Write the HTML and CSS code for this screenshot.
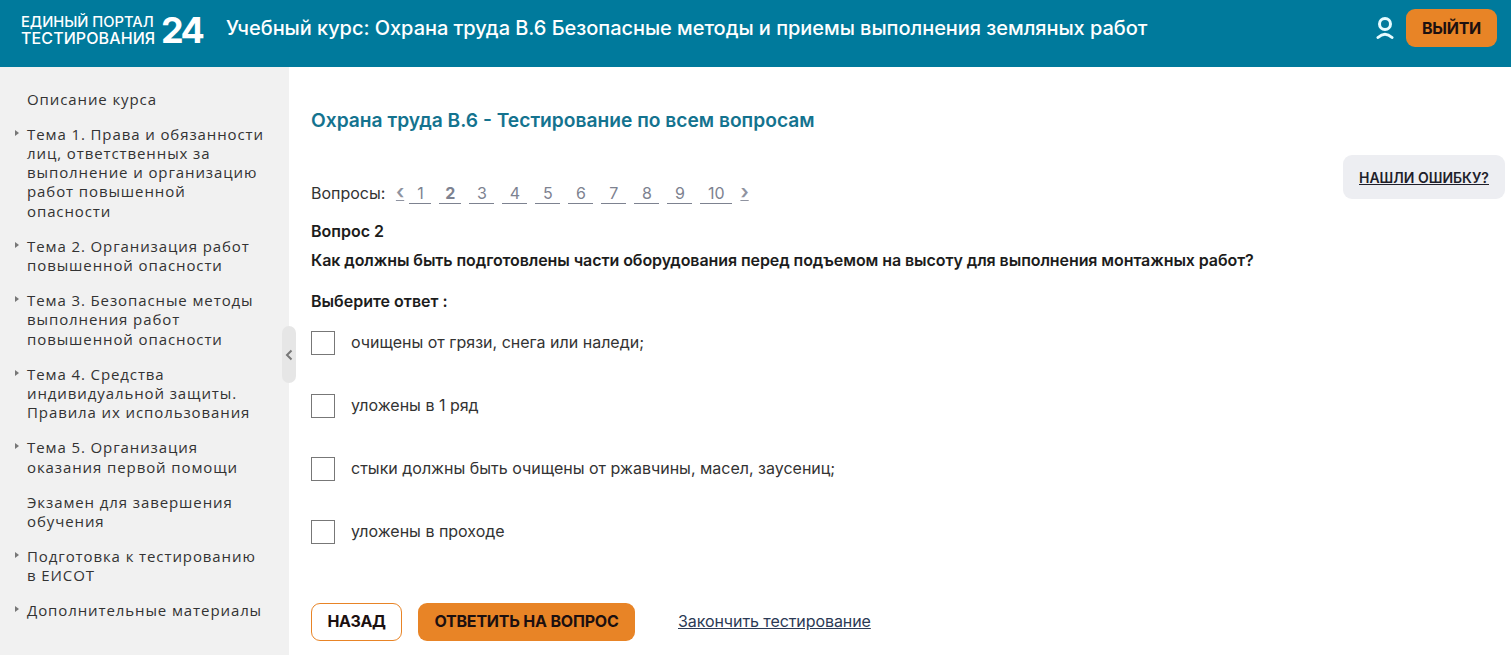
FILE: index.html
```html
<!DOCTYPE html>
<html lang="ru">
<head>
    <meta charset="UTF-8">
    <title>Учебный курс</title>
    <link rel="stylesheet" href="styles.css">
</head>
<body>
    <!-- Header -->
    <div class="header">
        <div class="logo">
            <div class="logo-text"><span class="logo-top">ЕДИНЫЙ ПОРТАЛ</span><span class="logo-bottom">ТЕСТИРОВАНИЯ</span></div>
            <div class="logo-num">24</div>
        </div>
        <div class="course-title">Учебный курс: Охрана труда В.6 Безопасные методы и приемы выполнения земляных работ</div>
        <svg class="user-icon" width="18" height="24" viewBox="0 0 18 24" fill="none" stroke="#e6fbff" stroke-width="3">
            <circle cx="9" cy="8" r="5.5"/>
            <path d="M2 21.5 Q9 15 16 21.5" stroke-linecap="round"/>
        </svg>
        <button class="logout">ВЫЙТИ</button>
    </div>

    <div class="layout">
        <!-- Sidebar -->
        <div class="sidebar">
            <div class="menu-item plain">Описание курса</div>
            <div class="menu-item">Тема 1. Права и обязанности лиц, ответственных за выполнение и организацию работ повышенной опасности</div>
            <div class="menu-item">Тема 2. Организация работ повышенной опасности</div>
            <div class="menu-item">Тема 3. Безопасные методы выполнения работ повышенной опасности</div>
            <div class="menu-item">Тема 4. Средства индивидуальной защиты. Правила их использования</div>
            <div class="menu-item">Тема 5. Организация оказания первой помощи</div>
            <div class="menu-item plain">Экзамен для завершения обучения</div>
            <div class="menu-item">Подготовка к тестированию в ЕИСОТ</div>
            <div class="menu-item">Дополнительные материалы</div>
            <div class="collapse">
                <svg width="8" height="12" viewBox="0 0 8 12" fill="none" stroke="#777" stroke-width="2"><path d="M6.5 1.5 L2 6 L6.5 10.5"/></svg>
            </div>
        </div>

        <!-- Test -->
        <div class="content">
            <h1 class="test-title">Охрана труда В.6 - Тестирование по всем вопросам</h1>
            <div class="pager">
                <span class="pager-label">Вопросы:</span>
                <a class="arrow">‹</a>
                <a class="page narrow">1</a>
                <a class="page narrow current">2</a>
                <a class="page">3</a>
                <a class="page">4</a>
                <a class="page">5</a>
                <a class="page">6</a>
                <a class="page">7</a>
                <a class="page">8</a>
                <a class="page">9</a>
                <a class="page wide">10</a>
                <a class="arrow">›</a>
            </div>
            <div class="question-num">Вопрос 2</div>
            <div class="question">Как должны быть подготовлены части оборудования перед подъемом на высоту для выполнения монтажных работ?</div>
            <div class="choose">Выберите ответ :</div>
            <div class="answers">
                <label class="answer"><span class="check"></span>очищены от грязи, снега или наледи;</label>
                <label class="answer"><span class="check"></span>уложены в 1 ряд</label>
                <label class="answer"><span class="check"></span>стыки должны быть очищены от ржавчины, масел, заусениц;</label>
                <label class="answer"><span class="check"></span>уложены в проходе</label>
            </div>
            <div class="actions">
                <button class="btn back">НАЗАД</button>
                <button class="btn submit">ОТВЕТИТЬ НА ВОПРОС</button>
                <a class="finish">Закончить тестирование</a>
            </div>
            <a class="report">НАШЛИ ОШИБКУ?</a>
        </div>
    </div>
</body>
</html>
```

FILE: styles.css
```css
/* Basic Reset */
body {
    margin: 0;
    font-family: Inter, Arial, sans-serif;
    background-color: #fff;
    color: #1c1c1c;
    height: 655px;
    overflow: hidden;
}

/* Header */
.header {
    height: 67px;
    display: flex;
    align-items: center;
    padding: 0 14px 11px 21px;
    background-color: #007a9c;
    color: #fff;
    box-sizing: border-box;
}

.logo {
    display: flex;
    align-items: center;
    width: 205px;
    margin-top: 3px;
}

.logo-text {
    display: flex;
    flex-direction: column;
    font-weight: 500;
    width: 140px;
    margin-top: 1px;
}

.logo-top {
    font-size: 14.7px;
    line-height: 15px;
    white-space: nowrap;
}

.logo-bottom {
    font-size: 16px;
    line-height: 16px;
    letter-spacing: 0.1px;
    white-space: nowrap;
}

.logo-num {
    font-size: 36px;
    font-weight: 700;
    line-height: 36px;
    letter-spacing: -2.5px;
}

.course-title {
    flex: 1;
    font-size: 20px;
    font-weight: 500;
    letter-spacing: -0.045px;
}

.user-icon {
    margin-right: 12px;
}

.logout {
    width: 91px;
    height: 38px;
    border: none;
    border-radius: 9px;
    background-color: #e88426;
    color: #1c1010;
    font-family: Inter, Arial, sans-serif;
    font-size: 16px;
    font-weight: 700;
    letter-spacing: -0.3px;
}

.layout {
    display: flex;
    height: 588px;
}

/* Sidebar */
.sidebar {
    position: relative;
    width: 289px;
    flex-shrink: 0;
    box-sizing: border-box;
    padding: 22.5px 22px 0 27px;
    background-color: #f1f1f1;
    font-family: "Open Sans", Arial, sans-serif;
    font-size: 15px;
    line-height: 19.3px;
    letter-spacing: 0.9px;
    color: #333;
}

.menu-item {
    position: relative;
    margin-bottom: 15.75px;
}

.menu-item::before {
    content: "";
    position: absolute;
    left: -12px;
    top: 5px;
    border-left: 4px solid #777;
    border-top: 3px solid transparent;
    border-bottom: 3px solid transparent;
}

.menu-item.plain::before {
    display: none;
}

.collapse {
    position: absolute;
    right: -7px;
    top: 259px;
    width: 14px;
    height: 57px;
    border-radius: 7px;
    background-color: #e6e6e6;
    display: flex;
    align-items: center;
    justify-content: center;
}

/* Test */
.content {
    position: relative;
    flex: 1;
    padding: 41px 0 0 22px;
}

.test-title {
    margin: 0 0 51px;
    font-size: 19.2px;
    line-height: 24px;
    font-weight: 600;
    color: #14738f;
}

.pager {
    display: flex;
    align-items: baseline;
    font-size: 16px;
    line-height: 19px;
    color: #333;
    margin-bottom: 17px;
}

.pager-label {
    margin-right: 10.5px;
}

.arrow {
    width: 7px;
    margin-right: 6.5px;
    color: #8f93a0;
    font-size: 20px;
    line-height: 19px;
    font-weight: 600;
    text-align: center;
    text-decoration: underline;
    text-decoration-thickness: 1px;
}

.page {
    width: 25px;
    margin-right: 8px;
    text-align: center;
    color: #7d8290;
    border-bottom: 1px solid #7d8290;
}

.page.narrow {
    width: 22px;
}

.page.current {
    font-weight: 700;
}

.page.wide {
    width: 32px;
}

.question-num {
    font-size: 16px;
    line-height: 20px;
    font-weight: 600;
    margin-bottom: 9px;
}

.question {
    font-size: 16px;
    line-height: 20px;
    font-weight: 600;
    letter-spacing: -0.08px;
    margin-bottom: 21px;
}

.choose {
    font-size: 16px;
    line-height: 20px;
    font-weight: 600;
    margin-bottom: 19px;
}

.answers {
    display: flex;
    flex-direction: column;
    gap: 39px;
}

.answer {
    display: flex;
    align-items: center;
    height: 24px;
    font-size: 16px;
    color: #333;
}

.check {
    width: 22px;
    height: 22px;
    margin-top: 2px;
    margin-right: 16px;
    border: 1px solid #777;
    background-color: #fff;
}

.actions {
    display: flex;
    align-items: center;
    margin-top: 60px;
}

.btn {
    height: 38px;
    padding-bottom: 3px;
    border-radius: 9px;
    font-family: Inter, Arial, sans-serif;
    font-size: 16px;
    font-weight: 700;
    color: #1c1010;
    letter-spacing: -0.2px;
}

.back {
    width: 91px;
    margin-right: 16px;
    border: 1px solid #e88426;
    background-color: #fff;
    letter-spacing: -0.4px;
}

.submit {
    width: 217px;
    margin-right: 43px;
    border: none;
    background-color: #e88426;
}

.finish {
    margin-bottom: 2px;
    font-size: 16px;
    letter-spacing: -0.08px;
    color: #2c3a55;
    text-decoration: underline;
}

.report {
    position: absolute;
    right: 6px;
    top: 88px;
    width: 162px;
    height: 44px;
    display: flex;
    align-items: center;
    justify-content: center;
    border-radius: 9px;
    background-color: #edeef2;
    font-size: 14px;
    font-weight: 600;
    color: #1f1f2b;
    text-decoration: underline;
}
```
